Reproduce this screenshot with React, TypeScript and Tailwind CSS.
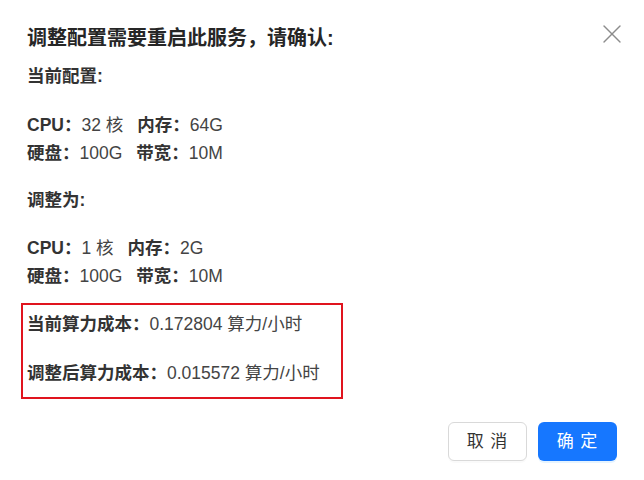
import { X } from 'lucide-react';

const font = { fontFamily: '"Liberation Sans", "Noto Sans CJK SC", sans-serif' };

function Spec({ label, value }: { label: string; value: string }) {
  return (
    <span>
      <span className="font-bold text-[#333]">{label}：</span>
      <span className="text-[#444]">{value}</span>
    </span>
  );
}

export default function App() {
  return (
    <div style={font} className="relative w-[644px] h-[480px] bg-white px-[27px] pt-[24px]">
      <button className="absolute right-[16px] top-[18px] text-[#8c8c8c]">
        <X className="w-[32px] h-[32px]" strokeWidth={1} />
      </button>

      <h1 className="text-[20px] leading-[28px] font-bold text-[#262626]">
        调整配置需要重启此服务，请确认:
      </h1>

      <div className="mt-[12px] text-[17.5px] leading-[24px] font-bold text-[#333]">当前配置:</div>

      <div className="mt-[23px] text-[17.5px] leading-[28px]">
        <div className="flex gap-[14px]">
          <Spec label="CPU" value="32 核" />
          <Spec label="内存" value="64G" />
        </div>
        <div className="flex gap-[14px]">
          <Spec label="硬盘" value="100G" />
          <Spec label="带宽" value="10M" />
        </div>
      </div>

      <div className="mt-[21px] text-[17.5px] leading-[24px] font-bold text-[#333]">调整为:</div>

      <div className="mt-[22px] text-[17.5px] leading-[28px]">
        <div className="flex gap-[14px]">
          <Spec label="CPU" value="1 核" />
          <Spec label="内存" value="2G" />
        </div>
        <div className="flex gap-[14px]">
          <Spec label="硬盘" value="100G" />
          <Spec label="带宽" value="10M" />
        </div>
      </div>

      <div className="mt-[13px] -ml-[6px] w-[322px] border-2 border-[#e0141e] pl-[4px] pt-[5px] pb-[10px] text-[17.5px] leading-[28px]">
        <div>
          <span className="font-bold text-[#333]">当前算力成本：</span>
          <span className="text-[#444]">0.172804 算力/小时</span>
        </div>
        <div className="mt-[21px]">
          <span className="font-bold text-[#333]">调整后算力成本：</span>
          <span className="text-[#444]">0.015572 算力/小时</span>
        </div>
      </div>

      <div className="mt-[23px] flex justify-end gap-[11px]">
        <button className="w-[79px] h-[39px] rounded-[6px] border border-[#d9d9d9] bg-white text-[17px] text-[#333] tracking-[1px] shadow-[0_2px_0_rgba(0,0,0,0.02)]">
          取 消
        </button>
        <button className="w-[79px] h-[39px] rounded-[6px] bg-[#1677ff] text-[17px] text-white tracking-[1px] shadow-[0_2px_0_rgba(5,145,255,0.1)]">
          确 定
        </button>
      </div>
    </div>
  );
}
